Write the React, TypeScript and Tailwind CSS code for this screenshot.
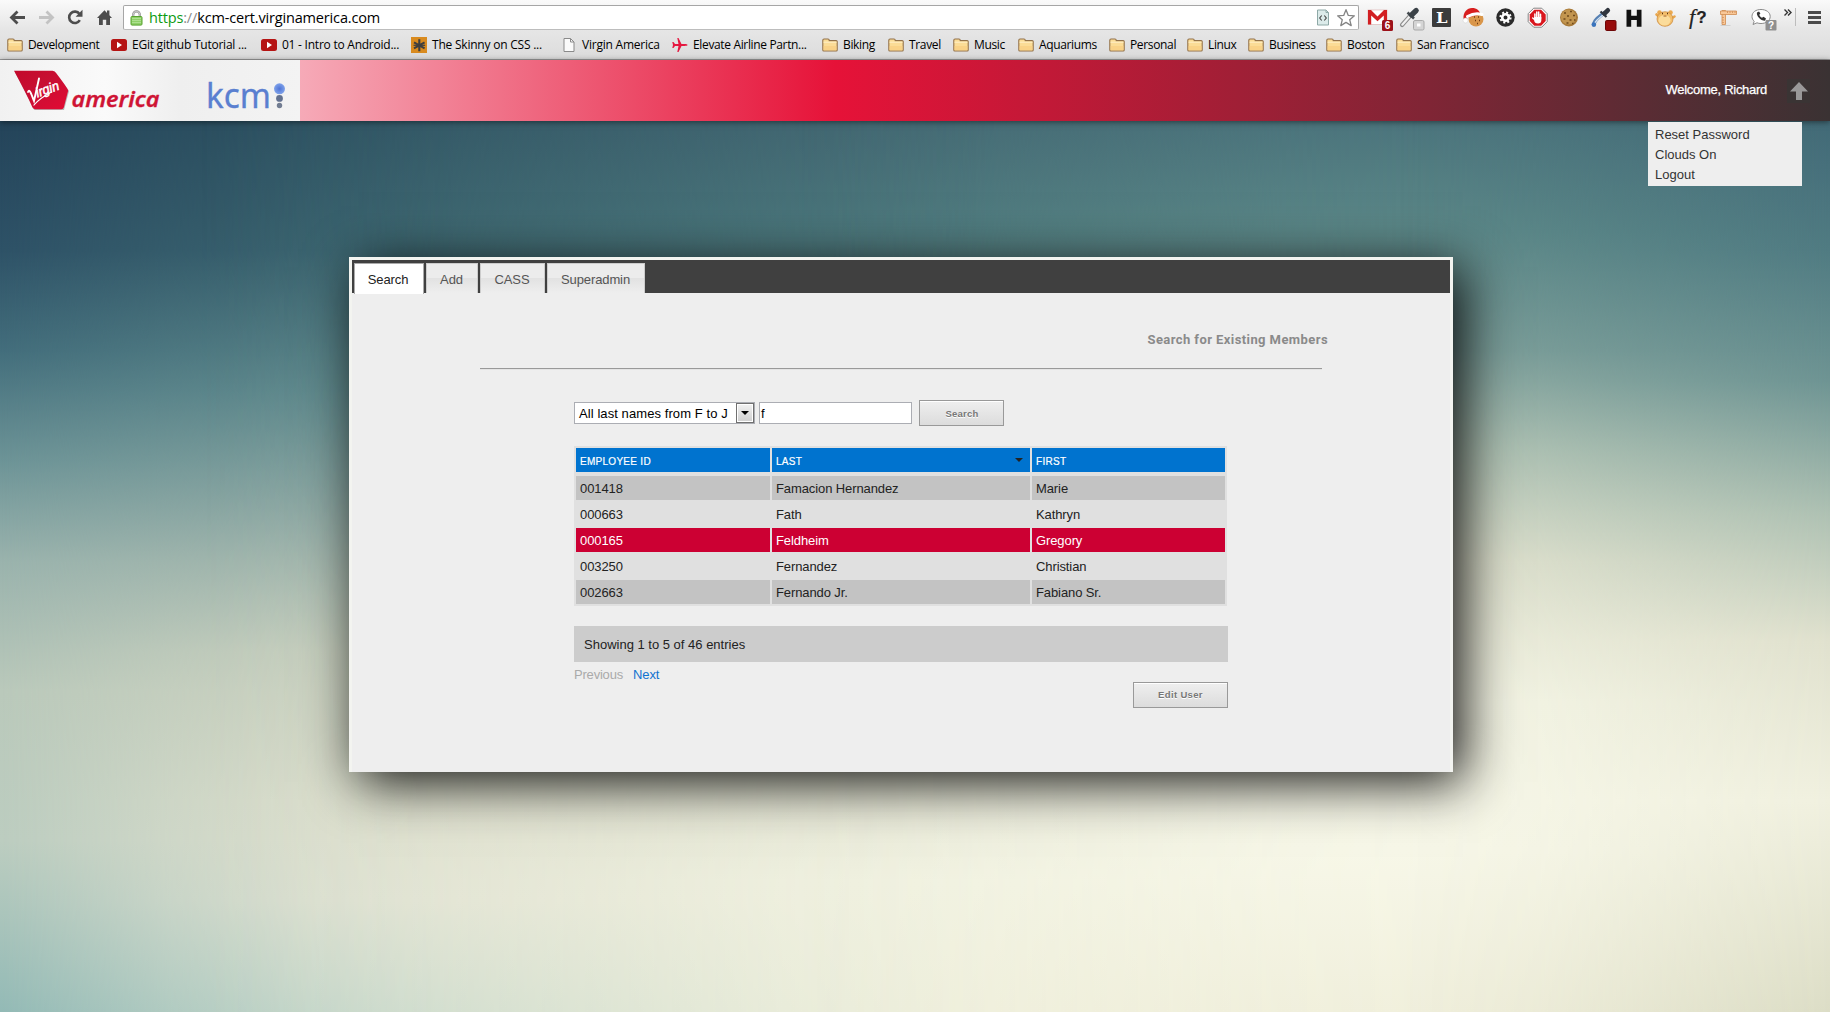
import React from 'react';

/* ---------- browser toolbar ---------- */

const stroke = '#4d4d4d';

function NavIcons() {
  return (
    <svg width="123" height="36" viewBox="0 0 123 36" className="shrink-0">
      <g fill="none" strokeLinecap="butt" strokeLinejoin="miter">
        <path d="M25 17.5H12M17.5 11.5L11.5 17.5L17.5 23.5" stroke={stroke} strokeWidth="2.8" />
        <path d="M39 17.5H52M46.500 11.500L52.500 17.500L46.500 23.500" stroke="#c3c3c3" strokeWidth="2.8" />
        <path d="M79.800 20.200A5.700 5.700 0 1 1 79.500 14" stroke={stroke} strokeWidth="2.6" />
      </g>
      <path d="M82.500 9.800V16.700H75.600Z" fill={stroke} />
      <path d="M97 18L104.500 10.300L107 12.900V10.600H109.400V15.300L112 18H110V25H106.200V19.800H102.800V25H99V18Z" fill={stroke} />
    </svg>
  );
}

function Lock() {
  return (
    <svg width="13" height="16" viewBox="0 0 13 16" className="shrink-0">
      <path d="M3.200 8V4.700a3.300 3.300 0 0 1 6.600 0V8" fill="none" stroke="#8c8c8c" strokeWidth="2.200" />
      <path d="M3.200 8V4.700a3.300 3.300 0 0 1 6.600 0V8" fill="none" stroke="#e4e4e4" strokeWidth=".8" />
      <rect x="1" y="6.500" width="11" height="8.600" rx="1" fill="#8fd069" stroke="#57a22e" />
      <path d="M2 8.500h9M2 10.500h9M2 12.500h9" stroke="#b5e39a" strokeWidth=".8" />
    </svg>
  );
}

function PageCode() {
  return (
    <svg width="14" height="17" viewBox="0 0 14 17">
      <path d="M1.500 1h8.500l2.500 2.500V16h-11z" fill="#dcebea" stroke="#8ea9a7" />
      <path d="M10 1v2.500h2.500" fill="none" stroke="#8ea9a7" />
      <path d="M5.700 6.500L3.700 9L5.700 11.500M8.300 6.500L10.300 9L8.300 11.500" fill="none" stroke="#444" strokeWidth="1.100" />
    </svg>
  );
}

function Star() {
  return (
    <svg width="20" height="20" viewBox="0 0 20 20">
      <path d="M10 1.700L12.300 7.400L18.400 7.800L13.700 11.700L15.200 17.600L10 14.400L4.800 17.600L6.300 11.700L1.600 7.800L7.700 7.400Z" fill="#fff" stroke="#848484" strokeWidth="1.300" strokeLinejoin="round" />
    </svg>
  );
}

const extensionIcons: React.ReactNode[] = [
  <>
    <rect x="6" y="10" width="19" height="14.500" fill="#fff" stroke="#d9aaa8" strokeWidth=".6" />
    <path d="M6 24.500V10h3l6.500 6.500L22 10h3v14.500h-3.200V15.500L15.500 21.300L9.200 15.500v9z" fill="#d21f22" />
    <rect x="20" y="20" width="11" height="11" rx="1.500" fill="#9c1119" />
    <text x="25.500" y="29.300" textAnchor="middle" fontSize="10" fontWeight="700" fill="#fff">6</text>
  </>,
  <>
    <path d="M8 25L16 16" stroke="#8b8b8b" strokeWidth="4.200" strokeLinecap="round" />
    <path d="M8.300 24.700L16 16" stroke="#f0f0f0" strokeWidth="2.200" strokeLinecap="round" />
    <path d="M13.500 12.500L20 18.500" stroke="#454b50" strokeWidth="2.600" />
    <path d="M17.500 15L22.200 10.500" stroke="#3b4248" strokeWidth="5.200" strokeLinecap="round" />
    <rect x="19.500" y="20.500" width="10.500" height="9.500" rx="1.500" fill="#d5d5d5" stroke="#a9a9a9" />
    <rect x="23" y="23.500" width="3.500" height="3" fill="#fff" />
  </>,
  <>
    <rect x="6" y="8" width="19" height="19" rx="1" fill="#3c3c3c" />
    <text x="10" y="23" fontFamily="DejaVu Serif" fontSize="14" fontWeight="700" fill="#fff" textLength="11.500" lengthAdjust="spacingAndGlyphs">L</text>
  </>,
  <>
    <circle cx="18" cy="19" r="7.500" fill="#d9964a" />
    <path d="M16 17h1M20 17h1M17 20.500h1M21 20.500h1M19 23.500h1" stroke="#6f3a12" strokeWidth="1.600" />
    <path d="M5.500 19C5 12 9 8 14 8C19 8 21.500 10.500 22.500 14.500L14 16.500L7.500 19Z" fill="#d81e1e" />
    <path d="M9.500 16.500C14 14 19 13 24 14.500" stroke="#fff" strokeWidth="3" fill="none" strokeLinecap="round" />
    <circle cx="7.500" cy="20.500" r="2.500" fill="#fff" stroke="#ccc" strokeWidth=".5" />
  </>,
  <>
    <circle cx="15.500" cy="17.500" r="9.200" fill="#2b2b2b" />
    <circle cx="15.500" cy="17.500" r="5.100" fill="none" stroke="#fff" strokeWidth="2" strokeDasharray="2 2" />
    <circle cx="15.500" cy="17.500" r="3.300" fill="none" stroke="#fff" strokeWidth="2.600" />
  </>,
  <>
    <path d="M11.700 8.200h8l5.500 5.500v8l-5.500 5.500h-8l-5.500-5.500v-8z" fill="#fff" stroke="#777" strokeWidth=".9" />
    <path d="M12.300 9.800h6.800l4.600 4.600v6.700l-4.600 4.600h-6.800l-4.600-4.600v-6.700z" fill="#d9171e" />
    <path d="M12.900 19v-5M14.800 18v-6M16.700 18v-6M18.500 19v-4.700" stroke="#fff" strokeWidth="1.500" strokeLinecap="round" />
    <path d="M12.200 17h7.100v3.500c0 2-1.200 3-3.300 3c-2.200 0-3.800-1.300-3.800-3z" fill="#fff" />
    <path d="M12.500 19.500L10.700 18" stroke="#fff" strokeWidth="1.500" strokeLinecap="round" />
  </>,
  <>
    <circle cx="15" cy="17.500" r="9" fill="#a97b3a" />
    <circle cx="14.500" cy="17" r="7.600" fill="#c2954f" />
    <path d="M10 13h2M16 11.500h2M13 16h2M19 15.500h2M9.500 19h2M15.500 20h2M20 20h1.500M12.500 23h2M18 23.500h1.500" stroke="#6f4a1c" strokeWidth="1.700" />
  </>,
  <>
    <path d="M8 25C7.500 21 12 17.500 17.500 13.500" stroke="#5781b3" strokeWidth="3.600" fill="none" strokeLinecap="round" />
    <path d="M8.800 23.500C9 21 13 18 17 15" stroke="#d5e4f3" strokeWidth="1.400" fill="none" />
    <path d="M14.500 11.500L20.500 17" stroke="#2f353d" strokeWidth="2.300" />
    <path d="M18.500 13.500L21.800 10.300" stroke="#2f353d" strokeWidth="4.600" strokeLinecap="round" />
    <circle cx="7.800" cy="24.500" r="2.300" fill="#3a74bd" />
    <rect x="19.500" y="20.500" width="10.500" height="10" rx="1.200" fill="#970c0c" stroke="#6d0606" />
  </>,
  <path d="M8.500 9.800h4.700v6h5.600v-6h4.700v17h-4.700v-6.700h-5.600v6.700H8.500z" fill="#111" />,
  <>
    <circle cx="9.500" cy="12.500" r="2.300" fill="#eba94f" />
    <circle cx="20.500" cy="12.500" r="2.300" fill="#eba94f" />
    <path d="M6.500 14.500l3 2.500M24.500 16.500l-4 2.500" stroke="#e8a64d" strokeWidth="2.600" strokeLinecap="round" />
    <ellipse cx="15" cy="19" rx="8" ry="7.300" fill="#f3be6b" stroke="#c9863a" strokeWidth=".7" />
    <ellipse cx="14.500" cy="20.300" rx="6" ry="5.200" fill="#fbdc9b" />
    <path d="M12 13.500h1M17 13.500h1" stroke="#5b3413" strokeWidth="1.500" />
    <path d="M13.500 16h3" stroke="#a25b22" strokeWidth="1" />
  </>,
  <text x="7" y="24" fontFamily="Liberation Serif" fontSize="22" fontStyle="italic" fill="#222" stroke="#222" strokeWidth=".2">
    f<tspan dx="1" fontFamily="Liberation Sans" fontSize="17" fontStyle="normal" fontWeight="700" dy="-1.500">?</tspan>
  </text>,
  <>
    <path d="M6.500 25.500h10" stroke="#cfcfcf" strokeWidth="1" />
    <path d="M8 10.500h3.500v14H8z" fill="#f8c797" stroke="#cf8b50" strokeWidth=".8" />
    <path d="M6.500 11h16v3.500h-16z" fill="#f8c797" stroke="#cf8b50" strokeWidth=".8" />
    <path d="M13.500 11.500v1.300M16 11.500v1.300M18.500 11.500v1.300M21 11.500v1.300M8.500 17.500H9.700M8.500 20H9.700M8.500 22.500H9.700" stroke="#b9713a" strokeWidth=".7" fill="none" />
  </>,
  <>
    <path d="M6 16.500C6 12 10 9.500 15 9.500S24.200 12.200 24.200 16.500S20 23.500 15 23.500C13.500 23.500 12 23.300 11 22.800L7 24.500L8.200 21.200C6.800 20 6 18.500 6 16.500Z" fill="#fff" stroke="#8a8a8a" strokeWidth="1" />
    <path d="M11 12.500C10 15.500 14.500 20.800 19 20.800L20 18.500L17.500 16.800L16 17.700C14.500 17 13.700 16 13.300 14.700L14.400 13.500L13 11.500Z" fill="#333" />
    <rect x="19.500" y="20" width="11" height="10.500" rx="1" fill="#8f8f8f" />
    <text x="25" y="28.800" textAnchor="middle" fontSize="10" fontWeight="700" fill="#fff">?</text>
  </>,
];

/* ---------- bookmarks ---------- */

function Folder() {
  return (
    <svg width="16" height="16" viewBox="0 0 16 16">
      <path d="M.8 13V3.300c0-.8.500-1.300 1.200-1.300h4c.8 0 1.200.4 1.200 1.200V3.600h7c.6 0 1 .4 1 1V13c0 .6-.4 1-1 1H1.800c-.6 0-1-.4-1-1z" fill="#fbdc96" stroke="#92714a" strokeWidth="1.100" />
      <path d="M1.500 5.200h13" stroke="#fff0c8" strokeWidth="1" />
      <path d="M1.500 9h13v4.300h-13z" fill="#f8cd80" opacity=".7" />
    </svg>
  );
}
function YouTube() {
  return (
    <svg width="16" height="16" viewBox="0 0 16 16">
      <rect x="0" y="2" width="16" height="12" rx="2.500" fill="#b51413" />
      <path d="M6 4.800v6.400L11 8z" fill="#fff" />
    </svg>
  );
}
function Asterisk() {
  return (
    <svg width="16" height="16" viewBox="0 0 16 16">
      <rect width="16" height="16" fill="#d98b1f" />
      <path d="M8.300 2.300v12M3 5.300l10.600 6M13.600 5.300L3 11.300" stroke="#3f3f3f" strokeWidth="2.100" />
      <path d="M2.500 8.300h11.600" stroke="#3f3f3f" strokeWidth="1.200" />
    </svg>
  );
}
function Page() {
  return (
    <svg width="16" height="16" viewBox="0 0 16 16">
      <path d="M3 1.500h6.500L13 5v9.500H3z" fill="#fafafa" stroke="#8a8a8a" />
      <path d="M9.500 1.500V5H13" fill="none" stroke="#8a8a8a" />
    </svg>
  );
}
function Plane() {
  return (
    <svg width="16" height="16" viewBox="0 0 16 16">
      <path d="M15.500 8C15.500 7.300 14.300 7.100 12.500 7.100H9.500L6.500 1H5.300L6.500 7.100H3L1.500 5H.3L1 8L.3 11H1.500L3 8.900H6.500L5.300 15H6.500L9.500 8.900H12.500C14.300 8.900 15.500 8.700 15.500 8Z" fill="#e5173f" />
    </svg>
  );
}

const bookmarks: { label: string; w: string; tracking?: string; icon: React.ReactNode }[] = [
  { label: 'Development', w: 'w-[104px]', icon: <Folder /> },
  { label: 'EGit github Tutorial ...', w: 'w-[150px]', tracking: 'tracking-[-0.24px]', icon: <YouTube /> },
  { label: '01 - Intro to Android...', w: 'w-[150px]', tracking: 'tracking-[-0.24px]', icon: <YouTube /> },
  { label: 'The Skinny on CSS ...', w: 'w-[150px]', tracking: 'tracking-[-0.22px]', icon: <Asterisk /> },
  { label: 'Virgin America', w: 'w-[111px]', tracking: 'tracking-[-0.22px]', icon: <Page /> },
  { label: 'Elevate Airline Partn...', w: 'w-[150px]', icon: <Plane /> },
  { label: 'Biking', w: 'w-[66px]', icon: <Folder /> },
  { label: 'Travel', w: 'w-[65px]', icon: <Folder /> },
  { label: 'Music', w: 'w-[65px]', icon: <Folder /> },
  { label: 'Aquariums', w: 'w-[91px]', icon: <Folder /> },
  { label: 'Personal', w: 'w-[78px]', icon: <Folder /> },
  { label: 'Linux', w: 'w-[61px]', icon: <Folder /> },
  { label: 'Business', w: 'w-[78px]', icon: <Folder /> },
  { label: 'Boston', w: 'w-[70px]', icon: <Folder /> },
  { label: 'San Francisco', w: 'w-[110px]', icon: <Folder /> },
];

function BrowserChrome() {
  return (
    <div className="flex h-[60px] shrink-0 flex-col border-b border-[#9b9b9b] bg-linear-to-b from-[#fafafa] via-[#e6e6e6] via-50% to-[#dcdcdc] font-['Open_Sans',sans-serif]">
      <div className="flex h-[34px] items-start">
        <NavIcons />
        <div className="mt-[5px] flex h-[25px] w-[1236px] shrink-0 items-center rounded-[2px] border border-[#a6a6a6] border-b-[#bdbdbd] bg-white pl-[6px] pr-[2px]">
          <Lock />
          <span className="ml-[6px] text-[14.500px] leading-[22px] tracking-[-0.16px] text-black">
            <span className="text-[#0c9b12]">https</span>
            <span className="text-[#8a8a8a]">://</span>kcm-cert.virginamerica.com
          </span>
          <div className="ml-auto flex items-center gap-[6px]">
            <PageCode />
            <Star />
          </div>
        </div>
        <div className="ml-[3px] flex font-['Liberation_Sans',sans-serif]">
          {extensionIcons.map((icon, i) => (
            <svg key={i} width="32" height="34" viewBox="0 0 32 34">
              {icon}
            </svg>
          ))}
        </div>
        <svg width="52" height="34" viewBox="0 0 52 34">
          <path d="M6.500 9.500L9.500 12.500L6.500 15.500M10 9.500L13 12.500L10 15.500" fill="none" stroke="#333" strokeWidth="1.400" />
          <path d="M17.500 8v18" stroke="#bdbdbd" />
          <path d="M30 12.500h13M30 17.500h13M30 22.500h13" stroke="#4a4a4a" strokeWidth="3" />
        </svg>
      </div>
      <div className="flex h-[22px] items-center pl-[7px]">
        {bookmarks.map((b) => (
          <div key={b.label} className={`flex shrink-0 items-center gap-[5px] ${b.w}`}>
            <span className="h-4 w-4 shrink-0">{b.icon}</span>
            <span className={`whitespace-nowrap text-[12px] leading-4 text-black ${b.tracking ?? 'tracking-[-0.35px]'}`}>{b.label}</span>
          </div>
        ))}
      </div>
    </div>
  );
}

/* ---------- site header ---------- */

function Logos() {
  return (
    <svg width="300" height="61" viewBox="0 0 300 61" className="shrink-0">
      <defs>
        <linearGradient id="plate" x1="0" y1="0" x2="1" y2="0">
          <stop offset="0" stopColor="#f1f1f1" />
          <stop offset=".35" stopColor="#fafafa" />
          <stop offset=".6" stopColor="#efefef" />
          <stop offset="1" stopColor="#f3f3f3" />
        </linearGradient>
        <linearGradient id="badge" x1="0" y1="0" x2="1" y2="1">
          <stop offset="0" stopColor="#c3092b" />
          <stop offset=".45" stopColor="#c80f33" />
          <stop offset="1" stopColor="#e30a33" />
        </linearGradient>
        <radialGradient id="dot" cx=".5" cy=".5" r=".5">
          <stop offset="0" stopColor="#4f74d6" />
          <stop offset="1" stopColor="#7fa2ea" />
        </radialGradient>
      </defs>
      <rect width="300" height="61" fill="url(#plate)" />
      <path d="M15 12.200L54 12.500Q68 28.500 69 31.200L64 50H34.200Q26 33 15 12.200Z" fill="#8b8b8b" opacity=".6" />
      <path d="M14 10.800H52.500Q55 11 56.500 13.500Q67.500 28 68.200 30.500L63.800 47.500Q63.200 49.200 61.500 49.200H35.500Q33.500 49.200 32.500 47.400Q26 33 14 10.800Z" fill="url(#badge)" />
      <g fill="none" stroke="#fff" strokeLinecap="round">
        <path d="M28 32C29.500 28.500 31 33 34 41L39 18.500" strokeWidth="1.900" />
        <path d="M34 45C38 40 44 36 51.500 32" strokeWidth="1.200" />
      </g>
      <text transform="translate(37.500 37.500) rotate(-20)" fontFamily="Liberation Sans" fontStyle="italic" fontSize="13.500" fill="#fff" stroke="#fff" strokeWidth=".5" textLength="24" lengthAdjust="spacingAndGlyphs">irgin</text>
      <text x="71.500" y="47" fontFamily="Noto Sans" fontStyle="italic" fontWeight="600" fontSize="21.500" fill="#cf1435" stroke="#cf1435" strokeWidth=".3" textLength="88" lengthAdjust="spacingAndGlyphs">america</text>
      <text x="206" y="47.500" fontFamily="Noto Sans" fontSize="35" fill="#5a7fd0" stroke="#5a7fd0" strokeWidth=".3" textLength="65" lengthAdjust="spacingAndGlyphs">kcm</text>
      <circle cx="279.500" cy="28.800" r="5.500" fill="url(#dot)" />
      <circle cx="279.500" cy="38.400" r="3.400" fill="#63718f" />
      <circle cx="279.500" cy="45.500" r="2.700" fill="#727d92" />
    </svg>
  );
}

function Header() {
  return (
    <header className="relative z-10 flex h-[61px] shrink-0 items-center bg-[linear-gradient(to_right,#ffffff_0px,#e61238_835px,#3a3233_1830px)] shadow-[0_1px_6px_rgba(0,0,0,0.5)]">
      <Logos />
      <span className="mb-[2px] ml-auto mr-[20px] text-[13px] leading-[20px] tracking-[-0.28px] text-white [-webkit-text-stroke:0.25px_#fff]">Welcome, Richard</span>
      <span className="mr-[20px] flex h-6 w-[23px] items-center justify-center bg-[#3a3434]">
        <svg width="18" height="18" viewBox="0 0 18 18">
          <path d="M9 0L18 9.500H12V18H6V9.500H0Z" fill="#999" />
        </svg>
      </span>
      <ul className="absolute left-[1648px] top-[62px] h-16 w-[154px] bg-[#eee] pl-[7px] pt-[3px] text-[13px] leading-[20px] text-[#333]">
        <li>Reset Password</li>
        <li>Clouds On</li>
        <li>Logout</li>
      </ul>
    </header>
  );
}

/* Soft sky: vertical ramps cross-faded from left to right. */
function Sky() {
  return (
    <div className="absolute inset-0">
      <div className="absolute inset-0 bg-[linear-gradient(to_bottom,#24445a_0px,#2e5267_129px,#436e7c_230px,#6d9497_340px,#9ab3ad_440px,#bac9bb_570px,#bccdc0_720px,#93bab6_891px)]" />
      <div className="absolute inset-0 bg-[linear-gradient(to_bottom,#2f5463_0px,#3a636e_129px,#608a8d_270px,#8ea8a3_390px,#c6cebd_530px,#dcdecc_680px,#dfe1d1_780px,#cad9cb_891px)] [mask-image:linear-gradient(to_right,transparent_0px,rgba(0,0,0,0.55)_170px,rgba(0,0,0,0.88)_320px,black_460px)]" />
      <div className="absolute inset-0 bg-[linear-gradient(to_bottom,#456a74_0px,#4e7a7e_110px,#7a9e9a_300px,#d5d9c8_480px,#e8e9d8_680px,#f1f2e1_760px,#f0f0dd_891px)] [mask-image:linear-gradient(to_right,transparent_200px,rgba(0,0,0,0.12)_340px,rgba(0,0,0,0.8)_780px,black_1000px)]" />
      <div className="absolute inset-0 bg-[linear-gradient(to_bottom,#4c757d_0px,#5c8888_110px,#7d9f9a_230px,#b2c4b5_330px,#dfe1ce_440px,#f4f5e5_580px,#f7f7e8_730px,#f0efdc_891px)] [mask-image:linear-gradient(to_right,transparent_800px,rgba(0,0,0,0.2)_960px,rgba(0,0,0,0.85)_1280px,black_1440px)]" />
      <div className="absolute inset-0 bg-[linear-gradient(to_bottom,#426a77_0px,#507b82_129px,#6e9493_260px,#adc0b2_390px,#e0e1ce_520px,#f0f0df_680px,#dcddc6_891px)] [mask-image:linear-gradient(to_right,transparent_1400px,rgba(0,0,0,0.2)_1540px,black_1830px)]" />
    </div>
  );
}

/* ---------- search panel ---------- */

const rows = [
  ['001418', 'Famacion Hernandez', 'Marie'],
  ['000663', 'Fath', 'Kathryn'],
  ['000165', 'Feldheim', 'Gregory'],
  ['003250', 'Fernandez', 'Christian'],
  ['002663', 'Fernando Jr.', 'Fabiano Sr.'],
];
const selectedRow = 2;

function rowTone(i: number) {
  if (i === selectedRow) return 'bg-[#cc0033] text-white';
  return i % 2 === 0 ? 'bg-[#c3c3c3] text-[#222]' : 'bg-[#e0e0e0] text-[#222]';
}

const buttonClass =
  "flex h-[26px] items-center justify-center border border-[#999] bg-linear-to-b from-[#efefef] to-[#dcdcdc] text-[9.500px] font-bold text-[#777] shadow-[inset_0_1px_0_#fff] [text-shadow:0_1px_0_#fff] font-['Liberation_Sans',sans-serif]";

function Tabs() {
  const idle =
    'flex h-[30px] items-center justify-center border border-b-0 border-[#ccc] bg-[linear-gradient(to_bottom,#ececec_50%,#e2e2e2_50%,#eeeeee_100%)] pr-px pt-[2px] text-[#555]';
  return (
    <nav className="flex h-[33px] gap-[2px] bg-[#404040] pl-[2px] pt-[3px] text-[13px] tracking-[-0.1px]">
      <div className="flex h-[31px] w-[70px] items-center justify-center border border-b-0 border-[#aaa] bg-white pr-[2px] pt-px text-[#222]">Search</div>
      <div className={`w-[52px] ${idle}`}>Add</div>
      <div className={`w-[65px] ${idle}`}>CASS</div>
      <div className={`w-[98px] ${idle}`}>Superadmin</div>
    </nav>
  );
}

function MemberTable() {
  const columns = 'grid grid-cols-[194px_258px_193px] gap-x-[2px]';
  return (
    <div className="w-[653px] bg-[#e0e0e0] p-[2px] text-[13px] leading-[26px]">
      <div className={`${columns} mb-1 text-[10px] leading-[28px] tracking-[0.28px] text-white [-webkit-text-stroke:0.2px_#fff]`}>
        <div className="h-6 bg-[#0073cf] pl-1">EMPLOYEE ID</div>
        <div className="flex h-6 justify-between bg-[#0073cf] pl-1 pr-[7px]">
          <span>LAST</span>
          <svg width="8" height="4" viewBox="0 0 8 4" className="mt-[10px]">
            <path d="M0 0H8L4 4Z" fill="#222" />
          </svg>
        </div>
        <div className="h-6 bg-[#0073cf] pl-1">FIRST</div>
      </div>
      <div className="flex flex-col gap-[2px]">
        {rows.map((row, i) => (
          <div key={row[0]} className={columns}>
            {row.map((cell) => (
              <div key={cell} className={`h-6 pl-1 tracking-[-0.1px] ${rowTone(i)}`}>
                {cell}
              </div>
            ))}
          </div>
        ))}
      </div>
    </div>
  );
}

function Panel() {
  return (
    <section className="relative ml-[349px] mt-[136px] flex h-[515px] w-[1104px] flex-col border-[3px] border-b-0 border-[#f3f4f0] bg-[#eee] shadow-[10px_10px_50px_rgba(0,0,0,0.92)]">
      <Tabs />
      <h1 className="mr-[122px] mt-[37px] text-right font-['Roboto',sans-serif] text-[13px] font-bold leading-5 tracking-[0.42px] text-[#8a8a8a]">Search for Existing Members</h1>
      <div className="ml-[128px] mt-[18px] h-[2px] w-[842px] border-t border-[#999] bg-[#e4e4e4]" />

      <div className="ml-[222px] w-[654px]">
        <div className="mt-[30px] flex h-[26px] items-center">
          <div className="flex h-[22px] w-[181px] items-center border border-[#abadb3] bg-white pl-1">
            <span className="pt-px text-[13px] leading-5 tracking-[0.08px] text-black">All last names from F to J</span>
            <span className="ml-auto flex h-5 w-[18px] items-center justify-center border border-[#707070] bg-linear-to-b from-[#f2f2f2] to-[#cfcfcf] shadow-[inset_0_0_0_1px_#fff]">
              <svg width="8" height="4" viewBox="0 0 8 4">
                <path d="M0 0H8L4 4Z" fill="#000" />
              </svg>
            </span>
          </div>
          <div className="ml-1 flex h-[22px] w-[153px] items-center border border-[#abadb3] bg-white pl-px pt-px text-[13px] leading-5 text-black">f</div>
          <div className={`${buttonClass} ml-[7px] w-[85px] pl-px pt-[2px] tracking-[0.25px]`}>Search</div>
        </div>
        <div className="mt-5">
          <MemberTable />
        </div>
        <div className="mt-5 h-9 bg-[#ccc] pl-[10px] text-[13px] leading-[38px] text-[#222]">Showing 1 to 5 of 46 entries</div>
        <div className="mt-[2px] flex h-[18px] gap-[10px] pt-px text-[13px] leading-5">
          <span className="tracking-[-0.2px] text-[#aaa]">Previous</span>
          <span className="tracking-[-0.1px] text-[#1273d0]">Next</span>
        </div>
        <div className="flex justify-end">
          <div className={`${buttonClass} w-[95px] pt-px tracking-[0.35px]`}>Edit User</div>
        </div>
      </div>
    </section>
  );
}

export default function App() {
  return (
    <div className="flex h-[1012px] w-[1830px] flex-col overflow-hidden font-['Liberation_Sans',Arial,sans-serif]">
      <BrowserChrome />
      <Header />
      <main className="relative flex-1">
        <Sky />
        <div className="flex">
          <Panel />
        </div>
      </main>
    </div>
  );
}
